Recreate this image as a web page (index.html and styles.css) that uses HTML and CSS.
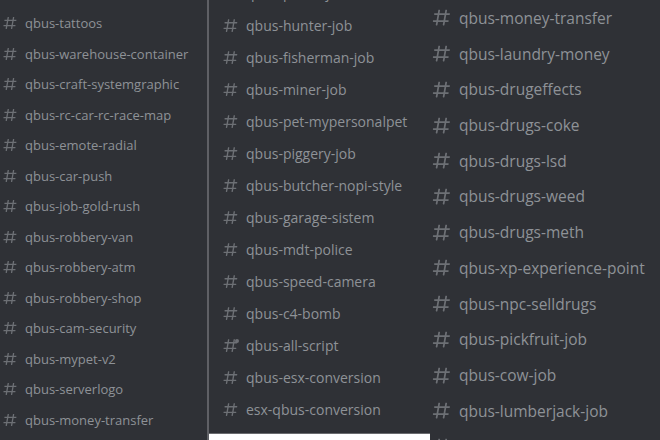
FILE: index.html
```html
<!DOCTYPE html>
<html>
<head>
<meta charset="utf-8">
<link rel="stylesheet" href="styles.css">
</head>
<body>
<svg width="0" height="0" class="defs">
  <defs>
    <symbol id="hash" viewBox="0 0 24 24">
      <path fill="currentColor" fill-rule="evenodd" d="M5.88657 21C5.57547 21 5.3399 20.7189 5.39427 20.4126L6.00001 17H2.59511C2.28449 17 2.04905 16.7198 2.10259 16.4138L2.27759 15.4138C2.31946 15.1746 2.52722 15 2.77011 15H6.35001L7.41001 9H4.00511C3.69449 9 3.45905 8.71977 3.51259 8.41381L3.68759 7.41381C3.72946 7.17456 3.93722 7 4.18011 7H7.76001L8.39677 3.41262C8.43914 3.17391 8.64664 3 8.88907 3H9.87344C10.1845 3 10.4201 3.28107 10.3657 3.58738L9.76001 7H15.76L16.3968 3.41262C16.4391 3.17391 16.6466 3 16.8891 3H17.8734C18.1845 3 18.4201 3.28107 18.3657 3.58738L17.76 7H21.1649C21.4755 7 21.711 7.28023 21.6574 7.58619L21.4824 8.58619C21.4406 8.82544 21.2328 9 20.9899 9H17.41L16.35 15H19.7549C20.0655 15 20.301 15.2802 20.2474 15.5862L20.0724 16.5862C20.0306 16.8254 19.8228 17 19.5799 17H16L15.3632 20.5874C15.3209 20.8261 15.1134 21 14.8709 21H13.8866C13.5755 21 13.3399 20.7189 13.3943 20.4126L14 17H8.00001L7.36325 20.5874C7.32088 20.8261 7.11337 21 6.87094 21H5.88657ZM9.41045 9L8.35045 15H14.3504L15.4104 9H9.41045Z"/>
    </symbol>
  </defs>
</svg>
<div class="collage">
  <section class="panel panel-left">
    <ul class="channels">
      <li class="channel"><svg class="hash"><use href="#hash"/></svg><span>qbus-phone-system</span></li>
      <li class="channel"><svg class="hash"><use href="#hash"/></svg><span>qbus-tattoos</span></li>
      <li class="channel"><svg class="hash"><use href="#hash"/></svg><span>qbus-warehouse-container</span></li>
      <li class="channel"><svg class="hash"><use href="#hash"/></svg><span>qbus-craft-systemgraphic</span></li>
      <li class="channel"><svg class="hash"><use href="#hash"/></svg><span>qbus-rc-car-rc-race-map</span></li>
      <li class="channel"><svg class="hash"><use href="#hash"/></svg><span>qbus-emote-radial</span></li>
      <li class="channel"><svg class="hash"><use href="#hash"/></svg><span>qbus-car-push</span></li>
      <li class="channel"><svg class="hash"><use href="#hash"/></svg><span>qbus-job-gold-rush</span></li>
      <li class="channel"><svg class="hash"><use href="#hash"/></svg><span>qbus-robbery-van</span></li>
      <li class="channel"><svg class="hash"><use href="#hash"/></svg><span>qbus-robbery-atm</span></li>
      <li class="channel"><svg class="hash"><use href="#hash"/></svg><span>qbus-robbery-shop</span></li>
      <li class="channel"><svg class="hash"><use href="#hash"/></svg><span>qbus-cam-security</span></li>
      <li class="channel"><svg class="hash"><use href="#hash"/></svg><span>qbus-mypet-v2</span></li>
      <li class="channel"><svg class="hash"><use href="#hash"/></svg><span>qbus-serverlogo</span></li>
      <li class="channel"><svg class="hash"><use href="#hash"/></svg><span>qbus-money-transfer</span></li>
    </ul>
  </section>
  <div class="divider"></div>
  <section class="panel panel-mid">
    <ul class="channels">
      <li class="channel"><svg class="hash"><use href="#hash"/></svg><span>qbus-police-job</span></li>
      <li class="channel"><svg class="hash"><use href="#hash"/></svg><span>qbus-hunter-job</span></li>
      <li class="channel"><svg class="hash"><use href="#hash"/></svg><span>qbus-fisherman-job</span></li>
      <li class="channel"><svg class="hash"><use href="#hash"/></svg><span>qbus-miner-job</span></li>
      <li class="channel"><svg class="hash"><use href="#hash"/></svg><span>qbus-pet-mypersonalpet</span></li>
      <li class="channel"><svg class="hash"><use href="#hash"/></svg><span>qbus-piggery-job</span></li>
      <li class="channel"><svg class="hash"><use href="#hash"/></svg><span>qbus-butcher-nopi-style</span></li>
      <li class="channel"><svg class="hash"><use href="#hash"/></svg><span>qbus-garage-sistem</span></li>
      <li class="channel"><svg class="hash"><use href="#hash"/></svg><span>qbus-mdt-police</span></li>
      <li class="channel"><svg class="hash"><use href="#hash"/></svg><span>qbus-speed-camera</span></li>
      <li class="channel"><svg class="hash"><use href="#hash"/></svg><span>qbus-c4-bomb</span></li>
      <li class="channel"><span class="hash-wrap"><svg class="hash"><use href="#hash"/></svg><i class="dot"></i></span><span>qbus-all-script</span></li>
      <li class="channel"><svg class="hash"><use href="#hash"/></svg><span>qbus-esx-conversion</span></li>
      <li class="channel"><svg class="hash"><use href="#hash"/></svg><span>esx-qbus-conversion</span></li>
    </ul>
  </section>
  <section class="panel panel-right">
    <ul class="channels">
      <li class="channel"><svg class="hash"><use href="#hash"/></svg><span>qbus-money-transfer</span></li>
      <li class="channel"><svg class="hash"><use href="#hash"/></svg><span>qbus-laundry-money</span></li>
      <li class="channel"><svg class="hash"><use href="#hash"/></svg><span>qbus-drugeffects</span></li>
      <li class="channel"><svg class="hash"><use href="#hash"/></svg><span>qbus-drugs-coke</span></li>
      <li class="channel"><svg class="hash"><use href="#hash"/></svg><span>qbus-drugs-lsd</span></li>
      <li class="channel"><svg class="hash"><use href="#hash"/></svg><span>qbus-drugs-weed</span></li>
      <li class="channel"><svg class="hash"><use href="#hash"/></svg><span>qbus-drugs-meth</span></li>
      <li class="channel"><svg class="hash"><use href="#hash"/></svg><span>qbus-xp-experience-point</span></li>
      <li class="channel"><svg class="hash"><use href="#hash"/></svg><span>qbus-npc-selldrugs</span></li>
      <li class="channel"><svg class="hash"><use href="#hash"/></svg><span>qbus-pickfruit-job</span></li>
      <li class="channel"><svg class="hash"><use href="#hash"/></svg><span>qbus-cow-job</span></li>
      <li class="channel"><svg class="hash"><use href="#hash"/></svg><span>qbus-lumberjack-job</span></li>
      <li class="channel"><svg class="hash"><use href="#hash"/></svg><span>qbus-hotdog-job</span></li>
    </ul>
  </section>
</div>
</body>
</html>
```

FILE: styles.css
```css
* { box-sizing: border-box; }

html, body {
  margin: 0;
  padding: 0;
  background: #ffffff;
  width: 660px;
  height: 440px;
  overflow: hidden;
}

.defs { position: absolute; width: 0; height: 0; }

.collage {
  display: flex;
  align-items: flex-start;
  width: 660px;
  height: 440px;
  font-family: "Open Sans", "Noto Sans", sans-serif;
  font-weight: 500;
}

.panel {
  background: #2f3136;
  overflow: hidden;
}

.panel-left {
  width: 207px;
  height: 440px;
  padding-left: 2px;
}

.divider {
  width: 2px;
  height: 440px;
  background: #5f6065;
  flex: none;
}

.panel-mid {
  width: 221px;
  height: 434px;
  padding-left: 13px;
  border-bottom: 1px solid #6a6b6f;
}

.panel-right {
  flex: 1;
  height: 440px;
  padding-left: 1px;
}

.channels {
  list-style: none;
  margin: 0;
  padding: 0;
}

.channel {
  display: flex;
  align-items: center;
  gap: 7px;
  color: #8e9297;
  white-space: nowrap;
}

.hash {
  flex: none;
  color: #6d7075;
}

.hash-wrap {
  position: relative;
  display: flex;
  flex: none;
}

.dot {
  position: absolute;
  top: 2px;
  right: 0;
  width: 4px;
  height: 4px;
  border-radius: 50%;
  background: #6d7075;
}

/* left column */
.panel-left .channels { margin-top: -22.8px; }
.panel-left .channel { height: 30.54px; font-size: 13px; }
.panel-left .hash { width: 16px; height: 16px; }

/* middle column */
.panel-mid .channels { margin-top: -23.1px; }
.panel-mid .channel { height: 32.08px; font-size: 14px; }
.panel-mid .hash { width: 17px; height: 17px; }

/* right column */
.panel-right .channels { margin-top: 0; }
.panel-right .channel { height: 35.73px; font-size: 15.5px; }
.panel-right .hash { width: 21px; height: 21px; }
```
